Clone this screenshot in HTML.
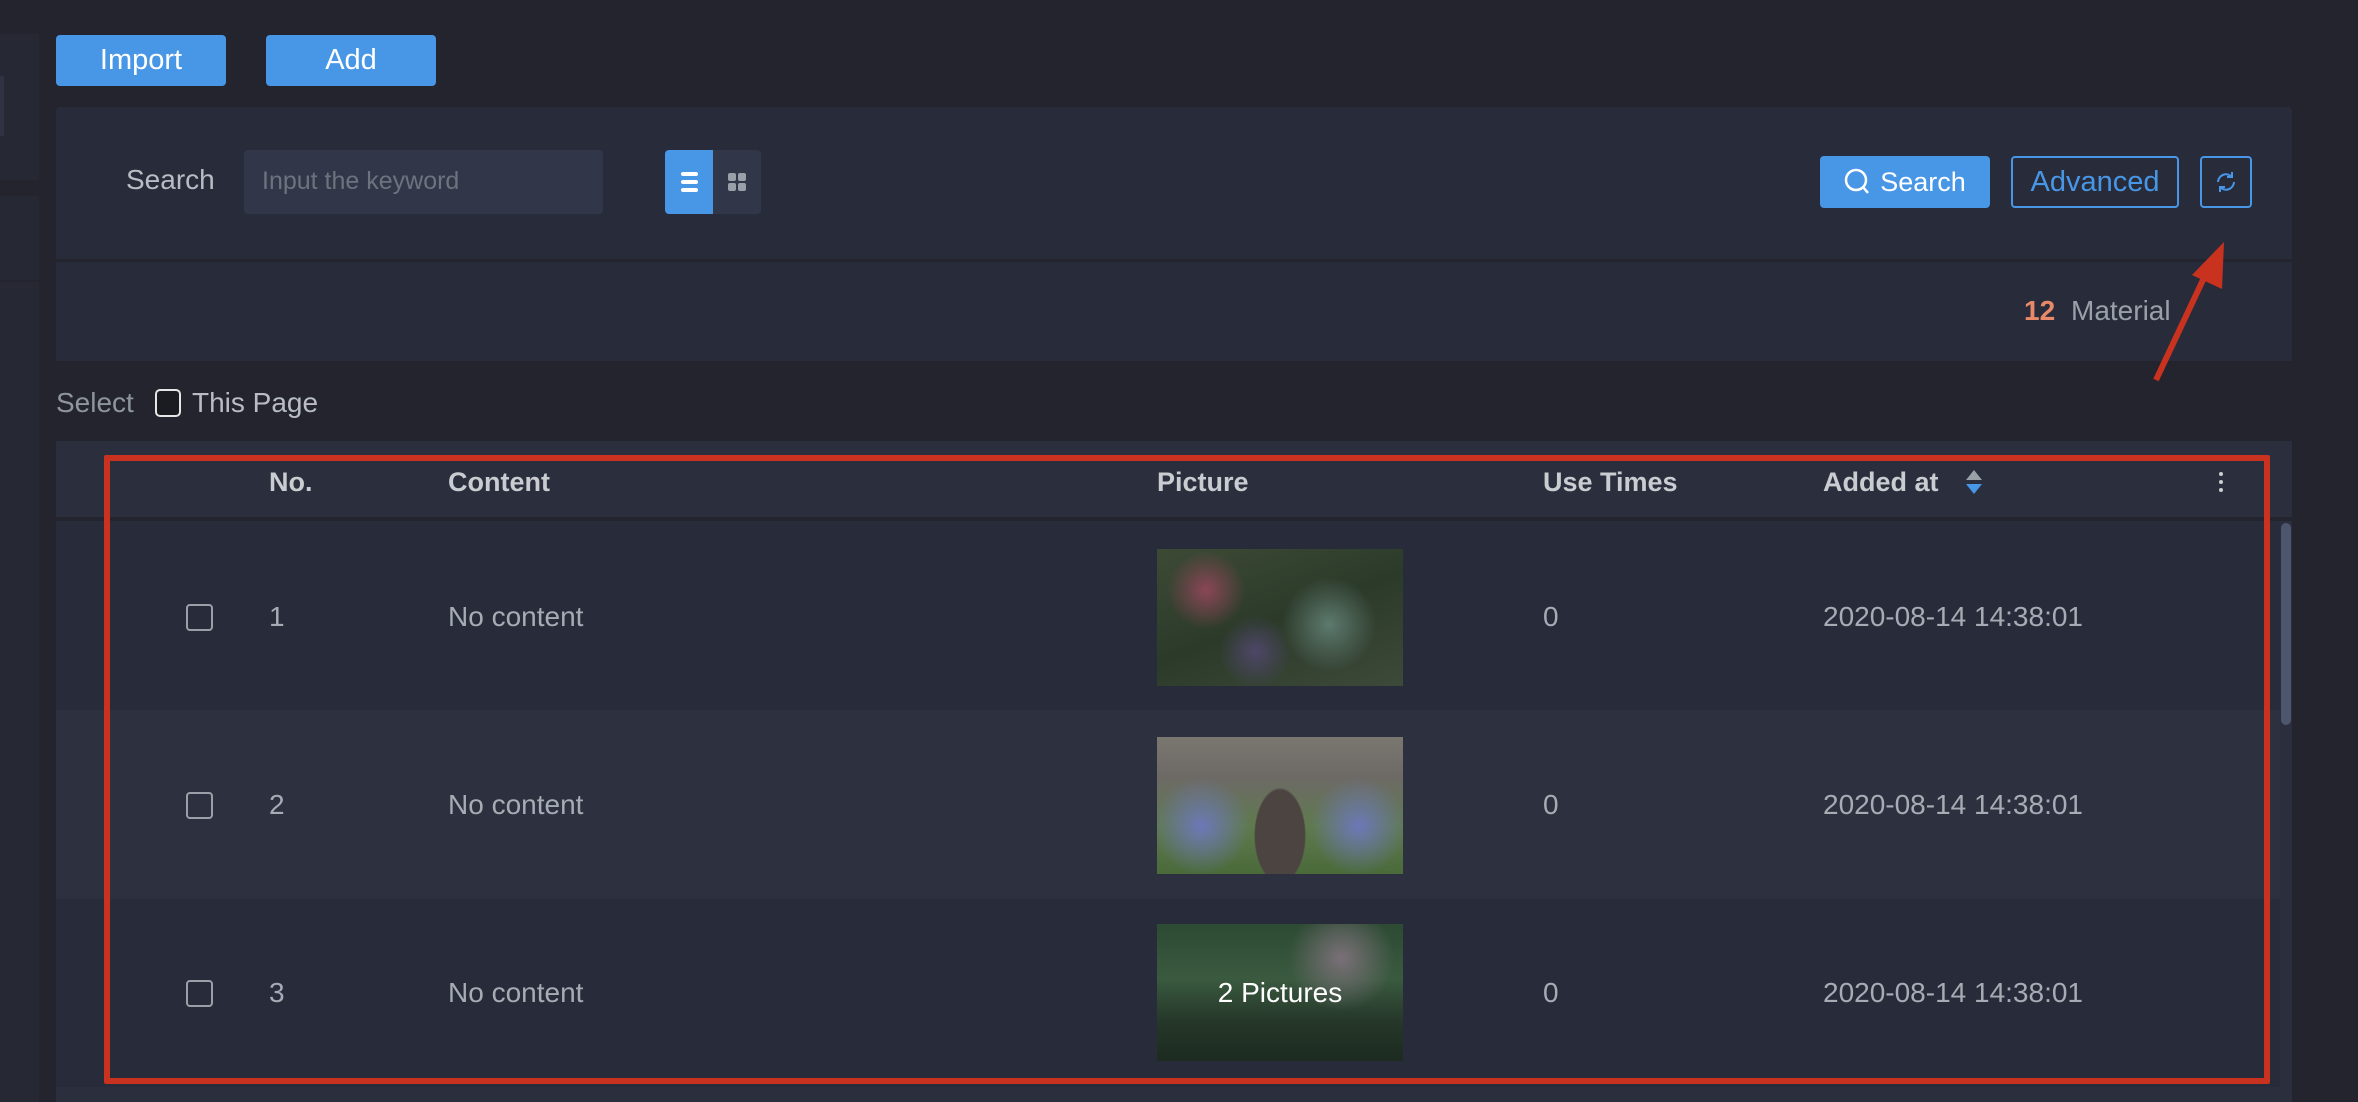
<!DOCTYPE html>
<html><head><meta charset="utf-8"><style>
*{box-sizing:border-box;margin:0;padding:0}
body{width:2358px;height:1102px;background:#23242e;position:relative;overflow:hidden;font-family:"Liberation Sans",sans-serif;color:#a6acb3}
.a{position:absolute}
.btn{position:absolute;background:#4896e6;color:#fff;border-radius:4px;font-size:29px;display:flex;align-items:center;justify-content:center}
.panel{position:absolute;background:#282b3a}
.t{position:absolute;font-size:28px;line-height:1;white-space:nowrap}
.h{position:absolute;font-size:27px;font-weight:bold;color:#c9ccd1;top:467px}
.cb{position:absolute;width:27px;height:27px;border:2px solid #9aa0a8;border-radius:4px}
.img{position:absolute;left:1157px;width:246px;height:137px}
</style></head><body>
<div class="a" style="left:0;top:34px;width:39px;height:1068px;background:#262833"></div>
<div class="a" style="left:0;top:180px;width:39px;height:16px;background:#23242e"></div>
<div class="a" style="left:0;top:76px;width:4px;height:60px;background:#2f3242"></div>
<div class="a" style="left:0;top:280px;width:39px;height:2px;background:#23242e"></div>

<div class="btn" style="left:56px;top:35px;width:170px;height:51px">Import</div>
<div class="btn" style="left:266px;top:35px;width:170px;height:51px">Add</div>

<div class="panel" style="left:56px;top:107px;width:2236px;height:152px;border-radius:4px 4px 0 0"></div>
<div class="panel" style="left:56px;top:262px;width:2236px;height:99px"></div>
<div class="t" style="left:126px;top:166px;color:#b8bdc3">Search</div>
<div class="a" style="left:244px;top:150px;width:359px;height:64px;background:#323649;border-radius:4px"></div>
<div class="t" style="left:262px;top:169px;font-size:25px;color:#6d737e">Input the keyword</div>
<div class="a" style="left:665px;top:150px;width:48px;height:64px;background:#4896e6;border-radius:4px 0 0 4px"></div>
<div class="a" style="left:713px;top:150px;width:48px;height:64px;background:#323649;border-radius:0 4px 4px 0"></div>
<div class="a" style="left:681px;top:172px;width:17px;height:4px;background:#fff;border-radius:2px"></div>
<div class="a" style="left:681px;top:180px;width:17px;height:4px;background:#fff;border-radius:2px"></div>
<div class="a" style="left:681px;top:188px;width:17px;height:4px;background:#fff;border-radius:2px"></div>
<div class="a" style="left:728px;top:173px;width:8px;height:8px;background:#9aa0a8;border-radius:2px"></div>
<div class="a" style="left:738px;top:173px;width:8px;height:8px;background:#9aa0a8;border-radius:2px"></div>
<div class="a" style="left:728px;top:183px;width:8px;height:8px;background:#9aa0a8;border-radius:2px"></div>
<div class="a" style="left:738px;top:183px;width:8px;height:8px;background:#9aa0a8;border-radius:2px"></div>

<div class="btn" style="left:1820px;top:156px;width:170px;height:52px;font-size:27px">
<svg width="26" height="28" viewBox="0 0 26 28" style="margin-right:10px"><circle cx="12" cy="12" r="10" fill="none" stroke="#fff" stroke-width="2.5"/><path d="M19 19l5 6" stroke="#fff" stroke-width="2.5"/></svg>Search</div>
<div class="a" style="left:2011px;top:156px;width:168px;height:52px;border:2px solid #4896e6;border-radius:4px;color:#4896e6;font-size:29px;display:flex;align-items:center;justify-content:center">Advanced</div>
<div class="a" style="left:2200px;top:156px;width:52px;height:52px;border:2px solid #4896e6;border-radius:4px"></div>
<svg class="a" style="left:2213px;top:169px" width="26" height="26" viewBox="0 0 26 26"><path d="M5 13a8 8 0 0 1 14-5" fill="none" stroke="#4896e6" stroke-width="2"/><path d="M19 3v5h-5" fill="none" stroke="#4896e6" stroke-width="2"/><path d="M21 13a8 8 0 0 1-14 5" fill="none" stroke="#4896e6" stroke-width="2"/><path d="M7 23v-5h5" fill="none" stroke="#4896e6" stroke-width="2"/></svg>

<div class="t" style="left:2024px;top:297px;color:#e8896a;font-weight:bold">12</div>
<div class="t" style="left:2071px;top:297px;color:#9aa0a8">Material</div>

<div class="t" style="left:56px;top:389px;color:#8f959d">Select</div>
<div class="a" style="left:155px;top:389px;width:26px;height:28px;border:2px solid #e6e6e6;border-radius:5px;background:#1b1c22"></div>
<div class="t" style="left:192px;top:389px;color:#b8bdc3">This Page</div>

<div class="a" style="left:56px;top:441px;width:2236px;height:78px;background:#2b2e3d;border-bottom:2px solid #23242e"></div>
<div class="a" style="left:56px;top:521px;width:2224px;height:189px;background:#282b3a"></div>
<div class="a" style="left:56px;top:710px;width:2224px;height:189px;background:#2d303f"></div>
<div class="a" style="left:56px;top:899px;width:2224px;height:188px;background:#282b3a"></div>
<div class="a" style="left:2280px;top:521px;width:12px;height:581px;background:#2b2e3d"></div>
<div class="a" style="left:2281px;top:523px;width:10px;height:202px;background:#4d566d;border-radius:5px"></div>
<div class="a" style="left:56px;top:1087px;width:2224px;height:15px;background:#2b2e3d"></div>

<div class="h" style="left:269px">No.</div>
<div class="h" style="left:448px">Content</div>
<div class="h" style="left:1157px">Picture</div>
<div class="h" style="left:1543px">Use Times</div>
<div class="h" style="left:1823px">Added at</div>
<svg class="a" style="left:1964px;top:468px" width="20" height="28" viewBox="0 0 20 28"><path d="M10 2l8 10H2z" fill="#9aa0a8"/><path d="M10 26l8-10H2z" fill="#4896e6"/></svg>
<div class="a" style="left:2219px;top:472px;width:4px;height:4px;background:#c9ccd1;border-radius:2px"></div>
<div class="a" style="left:2219px;top:480px;width:4px;height:4px;background:#c9ccd1;border-radius:2px"></div>
<div class="a" style="left:2219px;top:488px;width:4px;height:4px;background:#c9ccd1;border-radius:2px"></div>

<div class="cb" style="left:186px;top:604px"></div>
<div class="t" style="left:269px;top:603px">1</div>
<div class="t" style="left:448px;top:603px">No content</div>
<div class="img" style="top:549px;background:radial-gradient(circle at 20% 30%,#8a4656 0,transparent 18%),radial-gradient(circle at 70% 55%,#5d7a6e 0,transparent 25%),radial-gradient(circle at 40% 75%,#4e4668 0,transparent 20%),linear-gradient(160deg,#3c4a35,#2c3a2a 50%,#3d4a3a)"></div>
<div class="t" style="left:1543px;top:603px">0</div>
<div class="t" style="left:1823px;top:603px">2020-08-14 14:38:01</div>

<div class="cb" style="left:186px;top:792px"></div>
<div class="t" style="left:269px;top:791px">2</div>
<div class="t" style="left:448px;top:791px">No content</div>
<div class="img" style="top:737px;background:radial-gradient(ellipse 26px 48px at 50% 72%,#4c4440 0 95%,transparent 100%),radial-gradient(circle at 18% 65%,#6c78b8 0,transparent 22%),radial-gradient(circle at 82% 65%,#6c78b8 0,transparent 22%),linear-gradient(180deg,#7a7670 0,#6d6a66 30%,#5f7a4e 65%,#4a6a3a)"></div>
<div class="t" style="left:1543px;top:791px">0</div>
<div class="t" style="left:1823px;top:791px">2020-08-14 14:38:01</div>

<div class="cb" style="left:186px;top:980px"></div>
<div class="t" style="left:269px;top:979px">3</div>
<div class="t" style="left:448px;top:979px">No content</div>
<div class="img" style="top:924px;background:radial-gradient(circle at 75% 25%,#7a7078 0,transparent 25%),linear-gradient(180deg,#2d4a33,#3a5a3f 40%,#26382a 70%,#1c2a1f)"></div>
<div class="t" style="left:1157px;top:979px;width:246px;text-align:center;color:#fff">2 Pictures</div>
<div class="t" style="left:1543px;top:979px">0</div>
<div class="t" style="left:1823px;top:979px">2020-08-14 14:38:01</div>

<div class="a" style="left:104px;top:455px;width:2166px;height:629px;border:6px solid #c8321f;border-radius:2px"></div>
<svg class="a" style="left:0;top:0" width="2358" height="1102"><line x1="2156" y1="380" x2="2210" y2="265" stroke="#c8321f" stroke-width="6"/><path d="M2224 242l-2 47-30-14z" fill="#c8321f"/></svg>
</body></html>
